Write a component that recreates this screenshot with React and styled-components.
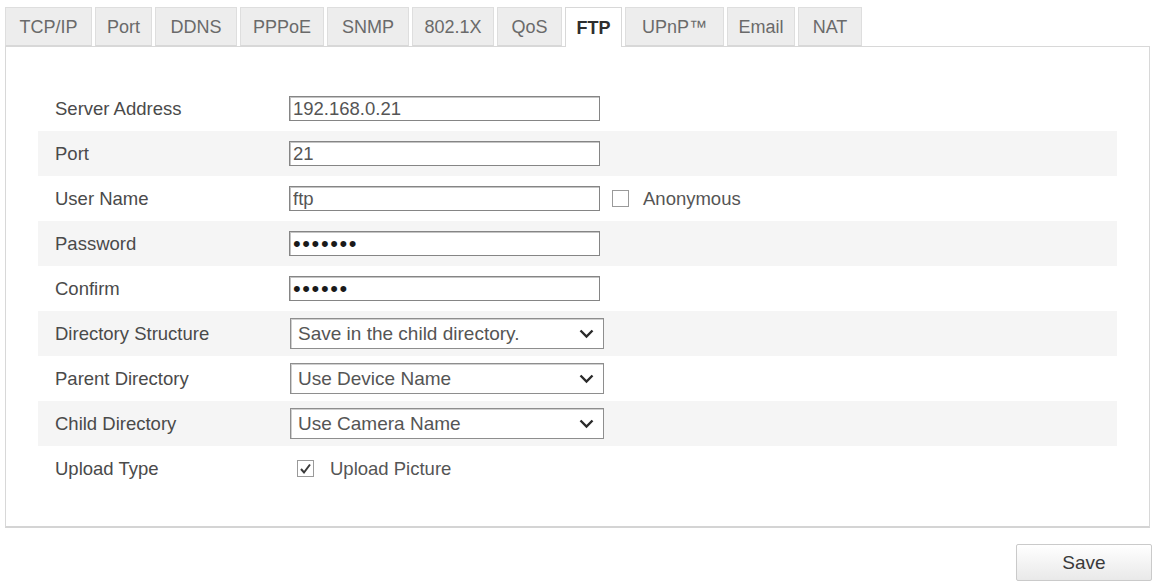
import React from "react";
import styled, { createGlobalStyle } from "styled-components";

const Global = createGlobalStyle`
  html, body { margin: 0; padding: 0; background: #ffffff; }
  body { font-family: "Liberation Sans", Arial, sans-serif; }
  * { box-sizing: border-box; }
`;

const Page = styled.div`
  width: 1154px;
  height: 582px;
  padding: 7px 2px 0 5px;
  display: flex;
  flex-direction: column;
  overflow: hidden;
`;

const TabBar = styled.div`
  display: flex;
  gap: 3px;
  height: 40px;
  margin-right: 2px;
  position: relative;
  z-index: 1;
`;

const Tab = styled.div`
  width: ${(p) => p.$w}px;
  height: ${(p) => (p.$active ? "40px" : "39px")};
  display: flex;
  align-items: center;
  justify-content: center;
  padding-top: 2px;
  font-size: 18px;
  color: ${(p) => (p.$active ? "#2e2e2e" : "#6a6a6a")};
  font-weight: ${(p) => (p.$active ? 700 : 400)};
  background: ${(p) => (p.$active ? "#ffffff" : "#ededed")};
  border: 1px solid ${(p) => (p.$active ? "#d8d8d8" : "#dedede")};
  border-bottom: ${(p) => (p.$active ? "none" : "1px solid #d8d8d8")};
  white-space: nowrap;
`;

const Panel = styled.div`
  margin-top: -1px;
  margin-right: 2px;
  height: 482px;
  border: 1px solid #d8d8d8;
  border-bottom: 2px solid #d4d4d4;
  background: #ffffff;
  padding: 39px 32px 0 32px;
  display: flex;
  flex-direction: column;
`;

const Row = styled.div`
  height: 45px;
  display: flex;
  align-items: center;
  padding-left: 17px;
  background: ${(p) => (p.$shade ? "#f5f5f5" : "transparent")};
`;

const Label = styled.div`
  width: 234px;
  flex: none;
  font-size: 18.5px;
  color: #4a4a4a;
`;

const TextField = styled.input`
  width: 311px;
  height: 25px;
  border: 1px solid #858585;
  box-shadow: inset 1px 1px 0 #c4c4c4;
  background: #ffffff;
  padding: 0 3px;
  font-family: "Liberation Sans", Arial, sans-serif;
  font-size: 18.5px;
  color: #555555;
  outline: none;
`;

const PasswordField = styled(TextField)`
  font-size: 22px;
  letter-spacing: 1.6px;
  color: #1a1a1a;
  padding-left: 3px;
`;

const SelectBox = styled.div`
  width: 314px;
  height: 31px;
  margin-left: 1px;
  border: 1px solid #8e8e8e;
  box-shadow: inset 1px 1px 0 #d0d0d0;
  background: #ffffff;
  display: flex;
  align-items: center;
  justify-content: space-between;
  padding: 0 9px 0 7px;
  font-size: 19px;
  color: #555555;
`;

const CheckWrap = styled.label`
  display: flex;
  align-items: center;
  margin-left: ${(p) => p.$offset || 0}px;
  gap: ${(p) => p.$gap || 14}px;
  font-size: 18.5px;
  color: #555555;
`;

const Box = styled.span`
  width: 17px;
  height: 17px;
  border: 1px solid #9a9a9a;
  background: #ffffff;
  display: flex;
  align-items: center;
  justify-content: center;
`;

const Footer = styled.div`
  display: flex;
  justify-content: flex-end;
  padding-top: 16px;
`;

const SaveButton = styled.button`
  width: 136px;
  height: 37px;
  border: 1px solid #cacaca;
  border-radius: 2px;
  background: linear-gradient(#ffffff, #e9e9e9);
  font-family: "Liberation Sans", Arial, sans-serif;
  font-size: 19px;
  color: #3a3a3a;
  cursor: pointer;
`;

const Chevron = () => (
  <svg width="15" height="10" viewBox="0 0 15 10">
    <path d="M1.5 1.5 L7.5 7.5 L13.5 1.5" fill="none" stroke="#2a2a2a" strokeWidth="2.4" />
  </svg>
);

const Tick = () => (
  <svg width="13" height="12" viewBox="0 0 13 12">
    <path d="M2 6 L5 9.5 L11 1.5" fill="none" stroke="#3a3a3a" strokeWidth="2" />
  </svg>
);

const tabs = [
  ["TCP/IP", 87],
  ["Port", 57],
  ["DDNS", 82],
  ["PPPoE", 84],
  ["SNMP", 82],
  ["802.1X", 82],
  ["QoS", 65],
  ["FTP", 57],
  ["UPnP™", 99],
  ["Email", 68],
  ["NAT", 64],
];

export default function App() {
  return (
    <>
      <Global />
      <Page>
        <TabBar>
          {tabs.map(([t, w]) => (
            <Tab key={t} $w={w} $active={t === "FTP"}>
              {t}
            </Tab>
          ))}
        </TabBar>
        <Panel>
          <Row>
            <Label>Server Address</Label>
            <TextField readOnly defaultValue="192.168.0.21" />
          </Row>
          <Row $shade>
            <Label>Port</Label>
            <TextField readOnly defaultValue="21" />
          </Row>
          <Row>
            <Label>User Name</Label>
            <TextField readOnly defaultValue="ftp" />
            <CheckWrap $offset={12} $gap={14}>
              <Box />
              Anonymous
            </CheckWrap>
          </Row>
          <Row $shade>
            <Label>Password</Label>
            <PasswordField type="password" readOnly defaultValue="1234567" />
          </Row>
          <Row>
            <Label>Confirm</Label>
            <PasswordField type="password" readOnly defaultValue="123456" />
          </Row>
          <Row $shade>
            <Label>Directory Structure</Label>
            <SelectBox>
              <span>Save in the child directory.</span>
              <Chevron />
            </SelectBox>
          </Row>
          <Row>
            <Label>Parent Directory</Label>
            <SelectBox>
              <span>Use Device Name</span>
              <Chevron />
            </SelectBox>
          </Row>
          <Row $shade>
            <Label>Child Directory</Label>
            <SelectBox>
              <span>Use Camera Name</span>
              <Chevron />
            </SelectBox>
          </Row>
          <Row>
            <Label>Upload Type</Label>
            <CheckWrap $offset={8} $gap={16}>
              <Box>
                <Tick />
              </Box>
              Upload Picture
            </CheckWrap>
          </Row>
        </Panel>
        <Footer>
          <SaveButton>Save</SaveButton>
        </Footer>
      </Page>
    </>
  );
}
